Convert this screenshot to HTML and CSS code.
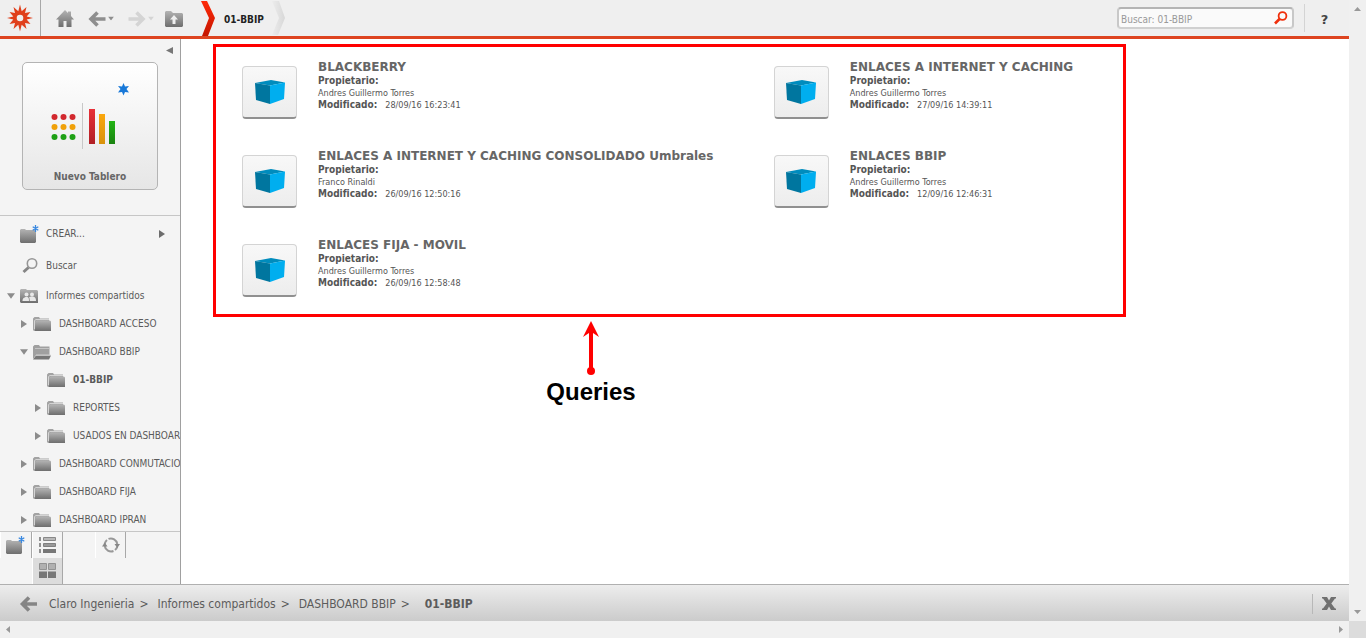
FILE: index.html
```
<!DOCTYPE html>
<html lang="es">
<head>
<meta charset="utf-8">
<title>01-BBIP</title>
<link rel="stylesheet" href="styles.css">
</head>
<body>
<svg class="defs" aria-hidden="true">
  <defs>
    <linearGradient id="grey" x1="0" y1="0" x2="0" y2="1"><stop offset="0" stop-color="#b4b4b4"/><stop offset="1" stop-color="#6e6e6e"/></linearGradient>
    <linearGradient id="red" x1="0" y1="0" x2="0" y2="1"><stop offset="0" stop-color="#ff2a08"/><stop offset="1" stop-color="#c41500"/></linearGradient>
    <linearGradient id="pale" x1="0" y1="0" x2="1" y2="0"><stop offset="0" stop-color="#ececec"/><stop offset="1" stop-color="#d8d8d8"/></linearGradient>
    <linearGradient id="barRed" x1="0" y1="0" x2="0" y2="1"><stop offset="0" stop-color="#e83038"/><stop offset="1" stop-color="#b02025"/></linearGradient>
    <linearGradient id="barAmber" x1="0" y1="0" x2="0" y2="1"><stop offset="0" stop-color="#fba70c"/><stop offset="1" stop-color="#d8920c"/></linearGradient>
    <linearGradient id="barGreen" x1="0" y1="0" x2="0" y2="1"><stop offset="0" stop-color="#22b414"/><stop offset="1" stop-color="#1a8210"/></linearGradient>
    <symbol id="folder" viewBox="0 0 18 16">
      <path d="M0 14V2.500L1.500 1H6l1 1.500h9V5H4L2 7v8H1z" fill="#a3a3a3"/>
      <path d="M1.500 13V4.500L3 3.500h13" fill="none" stroke="#d4d4d4"/>
      <path d="M2 15V6l2-1.500h13l1 1V15z" fill="url(#grey)"/>
    </symbol>
    <symbol id="folder-open" viewBox="0 0 18 16">
      <path d="M0 15V2.500L1.500 1H6l1 1.500h9.500V11H3z" fill="#a0a0a0"/>
      <path d="M2 4.500h14" stroke="#c4c4c4"/>
      <path d="M0 15.500l3-4h15L16 15.500z" fill="#777"/>
      <path d="M3 11h14.500" stroke="#d0d0d0"/>
    </symbol>
    <symbol id="folder-new" viewBox="0 0 20 19">
      <path d="M0 17V5l1-1h4l1 1h10v12l-1 1H1z" fill="url(#grey)"/>
      <path d="M15.500 0v7M12.700 1.700l5.600 3.500M18.300 1.700l-5.600 3.500" stroke="#3888e0" stroke-width="1.300"/>
    </symbol>
    <symbol id="cube" viewBox="0 0 32 25">
      <path d="M1 3L17 0l14 2.500L16 5.500z" fill="#008cbd"/>
      <path d="M1 3l15 2.500V24L2 20z" fill="#00769f"/>
      <path d="M16 5.500l15-3L30 19l-14 5z" fill="#00aeef"/>
    </symbol>
    <symbol id="right" viewBox="0 0 6 8"><path d="M0 0l6 4-6 4z"/></symbol>
    <symbol id="down" viewBox="0 0 9 6"><path d="M0 0h9L4.500 6z"/></symbol>
    <symbol id="back" viewBox="0 0 18 16"><path d="M9.500 1.500L3 8l6.500 6.500M3 8h14.500" fill="none" stroke="currentColor" stroke-width="3.600"/></symbol>
  </defs>
</svg>

<div class="window">
  <div class="app">
    <header class="topbar">
      <a class="logo" href="#" aria-label="Inicio">
        <svg width="26" height="28" viewBox="-13 -14 26 28"><path fill="#e0401c" fill-rule="evenodd" d="M0-13.500L1.700-6.700 6.500-11 5-4.900 10.500-6 6.700-1.600 13 0 6.700 1.600 10.500 6 5 4.900 6.500 11 1.700 6.700 0 13.500-1.700 6.700-6.500 11-5 4.900-10.500 6-6.700 1.600-13 0-6.700-1.600-10.500-6-5-4.900-6.500-11-1.700-6.700zM3.300 0A3.300 3.300 0 1 0-3.300 0 3.300 3.300 0 1 0 3.300 0z"/></svg>
      </a>
      <nav class="tools">
        <button aria-label="Página principal"><svg width="18" height="18" viewBox="0 0 18 18"><path fill="url(#grey)" d="M9 0l3 3V1.500h3V6l3 3.500h-2.500V17h-5v-6h-3v6h-5V9.500H0z"/></svg></button>
        <button class="back" aria-label="Atrás"><svg width="18" height="16"><use href="#back"/></svg><svg width="6" height="5" viewBox="0 0 9 6" fill="currentColor"><use href="#down"/></svg></button>
        <button class="forward" aria-label="Adelante"><svg width="18" height="16" viewBox="0 0 18 16"><path d="M8.500 1.500L15 8l-6.500 6.500M15 8H.500" fill="none" stroke="currentColor" stroke-width="3.600"/></svg><svg width="6" height="5" viewBox="0 0 9 6" fill="currentColor"><use href="#down"/></svg></button>
        <button aria-label="Subir"><svg width="18" height="16" viewBox="0 0 18 16"><path fill="url(#grey)" d="M0 15V1l1-1h5l2 2h9l1 1v12l-1 1H1z"/><path fill="#efefef" d="M9 4l4 4.500h-2.500V13h-3V8.500H5z"/></svg></button>
      </nav>
      <svg class="chevron" width="15" height="36" viewBox="0 0 15 36"><path d="M0 1h6l8 17-7 18H1l7-18z" fill="url(#red)"/></svg>
      <h1>01-BBIP</h1>
      <svg class="chevron" width="14" height="36" viewBox="0 0 14 36"><path d="M0 1h7l6 17-7 17H0l7-17z" fill="url(#pale)"/></svg>
      <form class="search">
        <input type="search" placeholder="Buscar: 01-BBIP" aria-label="Buscar">
        <button aria-label="Buscar"><svg width="14" height="14" viewBox="0 0 14 14" fill="none" stroke="#f0300c"><circle cx="8.500" cy="5" r="3.900" stroke-width="1.800"/><path d="M5.500 8L1 12.500" stroke-width="2.600"/></svg></button>
      </form>
      <button class="help" aria-label="Ayuda">?</button>
    </header>

    <div class="middle">
      <aside class="sidebar">
        <div class="create">
          <button class="collapse" aria-label="Contraer"><svg width="7" height="7" viewBox="0 0 7 7"><path d="M7 0v7L0 3.500z" fill="#777"/></svg></button>
          <button class="new-board">
            <svg width="78" height="68" viewBox="0 0 78 68">
              <path d="M75.500 0l1.500 3.500 4-.5-2.500 3L81 9.500l-4-.5-1.500 3.500L74 9l-4 .5L72.500 6 70 3l4 .5z" transform="translate(-3)" fill="#1878d8"/>
              <g fill="#d2282e"><circle cx="3.500" cy="34" r="3"/><circle cx="12.500" cy="34" r="3"/><circle cx="21.500" cy="34" r="3"/></g>
              <g fill="#f0a008"><circle cx="3.500" cy="44" r="3"/><circle cx="12.500" cy="44" r="3"/><circle cx="21.500" cy="44" r="3"/></g>
              <g fill="#1ea014"><circle cx="3.500" cy="54" r="3"/><circle cx="12.500" cy="54" r="3"/><circle cx="21.500" cy="54" r="3"/></g>
              <path d="M31.500 20v46" stroke="#c8c8c8"/>
              <path d="M38 26h6v35h-6z" fill="url(#barRed)"/><path d="M48 31h6v30h-6z" fill="url(#barAmber)"/><path d="M58 38h6v23h-6z" fill="url(#barGreen)"/>
            </svg>
            <span>Nuevo Tablero</span>
          </button>
        </div>
        <ul class="tree">
          <li class="tall"><i class="twist"></i><a href="#"><svg width="20" height="19"><use href="#folder-new"/></svg>CREAR...</a><svg class="more" width="6" height="8"><use href="#right"/></svg></li>
          <li class="tall"><i class="twist"></i><a href="#"><svg width="18" height="16" viewBox="0 0 18 16"><circle cx="11" cy="5.500" r="4.700" fill="none" stroke="#969696" stroke-width="1.600"/><path d="M7.500 9.500L2.500 14" stroke="#858585" stroke-width="3"/></svg>Buscar</a></li>
          <li><button class="twist" aria-label="Contraer"><svg width="8" height="6"><use href="#down"/></svg></button><a href="#"><svg width="18" height="16" viewBox="0 0 18 16"><path fill="url(#grey)" d="M0 14V2l1-1h5l1 1h10l1 1v12H1z"/><g fill="#e8e8e8"><circle cx="6.500" cy="6.500" r="2"/><circle cx="12" cy="6.500" r="2"/><path d="M2.500 13c0-3 2-3.500 3-4h2c1 .500 1.500 1 1.500 4zM9.700 13c0-2-.2-3-.7-3.700l2-.8h2c2 .500 3 1.500 3 4.500z"/></g></svg>Informes compartidos</a></li>
          <li class="l1"><button class="twist" aria-label="Expandir"><svg width="6" height="8"><use href="#right"/></svg></button><a href="#"><svg width="18" height="16"><use href="#folder"/></svg>DASHBOARD ACCESO</a></li>
          <li class="l1"><button class="twist" aria-label="Contraer"><svg width="8" height="6"><use href="#down"/></svg></button><a href="#"><svg width="18" height="16"><use href="#folder-open"/></svg>DASHBOARD BBIP</a></li>
          <li class="l2"><i class="twist"></i><a class="current" href="#"><svg width="18" height="16"><use href="#folder"/></svg>01-BBIP</a></li>
          <li class="l2"><button class="twist" aria-label="Expandir"><svg width="6" height="8"><use href="#right"/></svg></button><a href="#"><svg width="18" height="16"><use href="#folder"/></svg>REPORTES</a></li>
          <li class="l2"><button class="twist" aria-label="Expandir"><svg width="6" height="8"><use href="#right"/></svg></button><a href="#"><svg width="18" height="16"><use href="#folder"/></svg>USADOS EN DASHBOARD</a></li>
          <li class="l1"><button class="twist" aria-label="Expandir"><svg width="6" height="8"><use href="#right"/></svg></button><a href="#"><svg width="18" height="16"><use href="#folder"/></svg>DASHBOARD CONMUTACION</a></li>
          <li class="l1"><button class="twist" aria-label="Expandir"><svg width="6" height="8"><use href="#right"/></svg></button><a href="#"><svg width="18" height="16"><use href="#folder"/></svg>DASHBOARD FIJA</a></li>
          <li class="l1"><button class="twist" aria-label="Expandir"><svg width="6" height="8"><use href="#right"/></svg></button><a href="#"><svg width="18" height="16"><use href="#folder"/></svg>DASHBOARD IPRAN</a></li>
        </ul>
        <div class="views">
          <button class="edge" aria-label="Nueva carpeta"><svg width="20" height="19"><use href="#folder-new"/></svg></button>
          <div class="modes edge">
            <button aria-label="Lista"><svg width="18" height="16" viewBox="0 0 18 16"><path fill="#909090" d="M0 0h2v4H0zM0 6h2v4H0zM0 12h2v4H0z"/><path fill="#b8b8b8" stroke="#888" d="M4.500.500h12v3h-12z"/><path fill="#999" stroke="#808080" d="M4.500 6.500h12v3h-12z"/><path fill="#777" d="M4 12h13v4H4z"/></svg></button>
            <button class="active" aria-label="Iconos"><svg width="18" height="16" viewBox="0 0 18 16"><path fill="#b0b0b0" stroke="#929292" d="M.500.500h7v6h-7zM9.500.500h7v6h-7z"/><path fill="#777" d="M0 8.500h8V15H0zM9 8.500h8V15H9z"/></svg></button>
          </div>
          <button class="refresh edge" aria-label="Actualizar"><svg width="18" height="16" viewBox="0 0 18 16"><path d="M2.700 7A6.300 6.300 0 0 1 5 3M6.500 1.900A6.500 6.500 0 0 1 15.300 7M15.300 9.500A6.500 6.500 0 0 1 13 13M11.500 14A6.500 6.500 0 0 1 2.700 9" fill="none" stroke="#989898" stroke-width="2"/><path d="M0 9.500h5.500L2.700 5.500zM12.500 7H18l-2.700 4z" fill="#888"/></svg></button>
        </div>
      </aside>

      <main class="content">
        <section class="results">
          <article><a class="thumb" href="#" aria-label="BLACKBERRY"><svg width="32" height="25"><use href="#cube"/></svg></a><div><h2>BLACKBERRY</h2><b>Propietario:</b><p>Andres Guillermo Torres</p><p class="when"><b>Modificado:</b><time>28/09/16 16:23:41</time></p></div></article>
          <article><a class="thumb" href="#" aria-label="ENLACES A INTERNET Y CACHING"><svg width="32" height="25"><use href="#cube"/></svg></a><div><h2>ENLACES A INTERNET Y CACHING</h2><b>Propietario:</b><p>Andres Guillermo Torres</p><p class="when"><b>Modificado:</b><time>27/09/16 14:39:11</time></p></div></article>
          <article><a class="thumb" href="#" aria-label="ENLACES A INTERNET Y CACHING CONSOLIDADO Umbrales"><svg width="32" height="25"><use href="#cube"/></svg></a><div><h2>ENLACES A INTERNET Y CACHING CONSOLIDADO Umbrales</h2><b>Propietario:</b><p>Franco Rinaldi</p><p class="when"><b>Modificado:</b><time>26/09/16 12:50:16</time></p></div></article>
          <article><a class="thumb" href="#" aria-label="ENLACES BBIP"><svg width="32" height="25"><use href="#cube"/></svg></a><div><h2>ENLACES BBIP</h2><b>Propietario:</b><p>Andres Guillermo Torres</p><p class="when"><b>Modificado:</b><time>12/09/16 12:46:31</time></p></div></article>
          <article><a class="thumb" href="#" aria-label="ENLACES FIJA - MOVIL"><svg width="32" height="25"><use href="#cube"/></svg></a><div><h2>ENLACES FIJA - MOVIL</h2><b>Propietario:</b><p>Andres Guillermo Torres</p><p class="when"><b>Modificado:</b><time>26/09/16 12:58:48</time></p></div></article>
        </section>
        <div class="note">
          <svg width="16" height="56" viewBox="0 0 16 56" fill="#f00"><path d="M8 1l8 16-6-4v37H6V13l-6 4z"/><circle cx="8" cy="51" r="4"/></svg>
          <strong>Queries</strong>
        </div>
      </main>
    </div>

    <footer class="pathbar">
      <button class="path-back" aria-label="Atrás"><svg width="19" height="16" viewBox="0 0 18 16"><use href="#back"/></svg></button>
      <nav class="crumbs">
        <a href="#">Claro Ingenieria</a><span>&gt;</span>
        <a href="#">Informes compartidos</a><span>&gt;</span>
        <a href="#">DASHBOARD BBIP</a><span>&gt;</span>
        <b>01-BBIP</b>
      </nav>
      <button class="close" aria-label="Cerrar"><svg width="14" height="13" viewBox="0 0 14 13"><path d="M0 0h5l2 3.500L9 0h5v1.500h-1L9.300 6.500l3.700 5h1V13H9L7 9.500 5 13H0v-1.500h1l3.700-5L1 1.500H0z" fill="#707070"/></svg></button>
    </footer>
  </div>

  <div class="scroll vertical"><svg width="7" height="4" viewBox="0 0 7 4"><path d="M0 4h7L3.500 0z"/></svg><svg width="7" height="4" viewBox="0 0 7 4"><path d="M0 0h7L3.500 4z"/></svg></div>
  <div class="scroll horizontal"><svg width="4" height="7" viewBox="0 0 4 7"><path d="M4 0v7L0 3.500z"/></svg><svg width="4" height="7" viewBox="0 0 4 7"><path d="M0 0v7l4-3.500z"/></svg></div>
  <div class="corner"></div>
</div>
</body>
</html>
```
FILE: styles.css
```
* { box-sizing: border-box; }
body, h1, h2, p, ul { margin: 0; padding: 0; }
body {
  background: #fff;
  color: #5a5a5a;
  font: 10px/12px "DejaVu Sans Condensed", "DejaVu Sans", sans-serif;
}
button {
  display: flex;
  align-items: center;
  justify-content: center;
  padding: 0;
  border: 0;
  background: none;
  color: inherit;
  font: inherit;
}
a { color: inherit; text-decoration: none; }
svg { display: block; flex: none; }
.defs { position: absolute; width: 0; height: 0; }

.window {
  display: grid;
  grid-template: minmax(0, 1fr) 17px / minmax(0, 1fr) 17px;
  height: 100vh;
}
.app { display: flex; flex-direction: column; min-height: 0; }

/* Top bar */
.topbar {
  display: flex;
  align-items: center;
  flex: none;
  height: 39px;
  border-bottom: 3px solid #dd4420;
  background: #efefef;
}
.logo {
  display: flex;
  align-items: center;
  justify-content: center;
  align-self: stretch;
  width: 41px;
  border-right: 1px solid #a8a8a8;
}
.tools { display: flex; align-items: center; gap: 14px; padding: 1px 18px 0 15px; }
.tools button { gap: 2px; }
.back { color: #8e8e8e; }
.forward { color: #d4d4d4; }
.tools button:last-child { margin-left: -3px; }
.topbar h1 { padding: 4px 8px 0; color: #222; font-size: 10px; font-weight: bold; }
.search {
  display: flex;
  align-items: center;
  width: 177px;
  height: 22px;
  margin-left: auto;
  padding: 0 4px 0 2px;
  border: 2px solid #c0c0c0;
  border-color: #b4b4b4 #c8c8c8 #d0d0d0;
  border-radius: 4px;
  background: #fafafa;
}
.search input {
  flex: 1;
  min-width: 0;
  padding: 4px 0 0;
  border: 0;
  background: none;
  color: #555;
  font: inherit;
  outline: 0;
}
.search input::placeholder { color: #999; opacity: 1; }
.help {
  width: 45px;
  height: 28px;
  margin-left: 10px;
  padding: 3px 5px 0 0;
  border-left: 1px solid #d4d4d4;
  color: #444;
  font: bold 13px/16px "DejaVu Sans", sans-serif;
}

/* Side panel */
.middle { display: flex; flex: 1; min-height: 0; }
.sidebar {
  display: flex;
  flex-direction: column;
  flex: none;
  width: 181px;
  border-right: 1px solid #a0a0a0;
  background: #f4f4f4;
}
.create { padding: 8px 7px 25px 22px; border-bottom: 1px solid #c6c6c6; }
.collapse { margin: 0 0 8px auto; }
.new-board {
  flex-direction: column;
  justify-content: space-between;
  width: 136px;
  height: 128px;
  padding: 20px 0 6px;
  border: 1px solid #b4b4b4;
  border-radius: 5px;
  background: linear-gradient(#fff, #e6e6e6);
  color: #666;
  font-weight: bold;
}
.new-board svg { overflow: visible; }
.tree { flex: 1; min-height: 0; padding-top: 2px; overflow: hidden; list-style: none; }
.tree li { display: flex; align-items: center; height: 28px; padding-left: 7px; white-space: nowrap; }
.tree .tall { height: 32px; padding-right: 15px; }
.tree .l1 { padding-left: 20px; }
.tree .l2 { padding-left: 34px; }
.tree a { display: flex; align-items: center; gap: 8px; }
.tall a svg { width: 20px; margin-right: -2px; }
.current { font-weight: bold; }
.twist { flex: none; width: 8px; margin-right: 5px; }
.twist svg { fill: #8c8c8c; }
.more { margin-left: auto; fill: #6c6c6c; }
.views { display: flex; align-items: flex-start; height: 53px; flex: none; border-top: 1px solid #c6c6c6; }
.views button { width: 31px; height: 26px; }
.edge { border-right: 1px solid #a8a8a8; }
.views > .edge:first-child { width: 32px; border-left: 1px solid #fff; }
.modes { width: 31px; border-left: 1px solid #fff; }
.modes button { width: 29px; }
.modes .active { background: #dcdcdc; }
.views .refresh { margin-left: 32px; border-left: 1px solid #fff; }

/* Query list */
.content { flex: 1; min-width: 0; padding: 5px 32px; overflow: hidden; }
.results {
  display: grid;
  grid-template-columns: 3fr 2fr;
  gap: 29px 8px;
  max-width: 913px;
  padding: 12px 0 17px 26px;
  border: 3px solid #f00;
}
article { display: flex; gap: 21px; min-width: 0; color: #555; }
.thumb {
  display: flex;
  align-items: center;
  justify-content: center;
  flex: none;
  width: 55px;
  height: 53px;
  margin-top: 7px;
  border: 1px solid #d4d4d4;
  border-bottom: 2px solid #909090;
  border-radius: 4px;
  background: linear-gradient(#f8f8f8, #ededed);
}
article h2 {
  color: #666;
  font: bold 12px/16px "DejaVu Sans", sans-serif;
  white-space: nowrap;
}
article b { display: block; }
article p { font-size: 9px; }
.when { display: flex; gap: 8px; }
.when b { font-size: 10px; }
.note {
  display: flex;
  flex-direction: column;
  align-items: center;
  width: 90px;
  margin: 3px 0 0 333px;
}
.note strong { color: #000; font: bold 24px/32px "Liberation Sans", Arial, sans-serif; }

/* Location bar */
.pathbar {
  display: flex;
  align-items: center;
  flex: none;
  height: 37px;
  padding: 1px 13px 0 19px;
  border-top: 1px solid #b0b0b0;
  background: linear-gradient(#ededed, #cbcbcb);
  font-size: 12px;
  line-height: 16px;
}
.path-back { margin-right: 11px; color: #858585; }
.crumbs { display: flex; color: #5c5c5c; white-space: nowrap; }
.crumbs span { margin: 0 9px 0 5px; }
.crumbs b { margin-left: 6px; }
.close {
  height: 20px;
  margin-left: auto;
  padding-left: 9px;
  border-left: 1px solid #b8b8b8;
}

/* Scroll bars */
.scroll { display: flex; justify-content: space-between; align-items: center; background: #f0f0f0; fill: #999; }
.vertical { flex-direction: column; padding: 7px 0; }
.horizontal { padding: 0 6px; }
.corner { background: #dcdcdc; }
```
